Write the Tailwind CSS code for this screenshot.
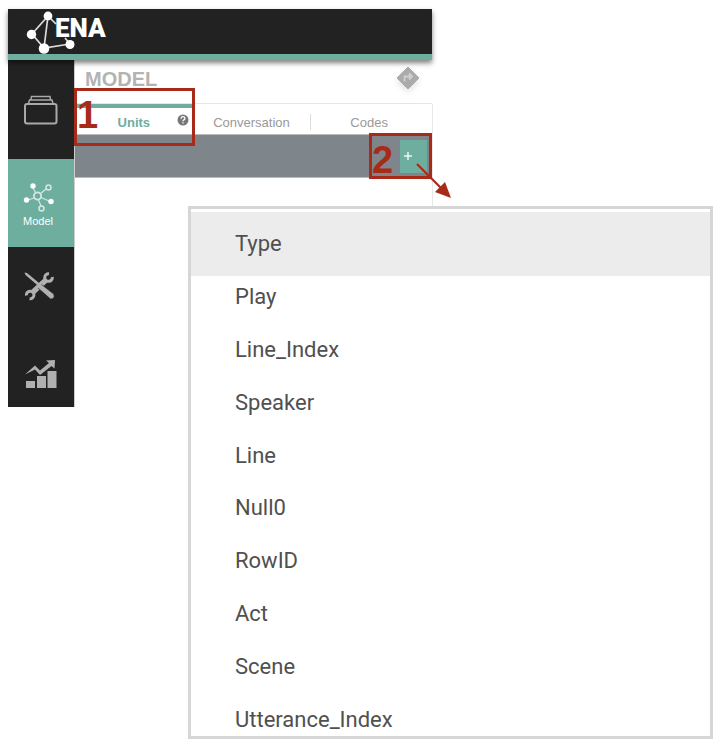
<!DOCTYPE html>
<html lang="en">
<head>
<meta charset="utf-8">
<meta name="viewport" content="width=device-width, initial-scale=1">
<title>ENA Model</title>
<script src="https://cdn.jsdelivr.net/npm/@tailwindcss/browser@4"></script>
</head>
<body class="relative min-h-screen bg-white font-['Liberation_Sans',Arial,sans-serif]">
<div class="pt-[9px] pl-2">
  <div class="w-full max-w-[424px]">
    <header class="relative z-10 flex h-[51px] items-start border-b-[6px] border-[#6eae9e] bg-[#222] shadow-[0_3px_5px_rgba(0,0,0,0.5)]">
      <svg class="absolute top-0 left-0" width="80" height="46" viewBox="0 0 80 46" aria-hidden="true">
        <g stroke="#ddd" stroke-width="1.7" fill="none"><path d="M40 7L24 25L36 39L62 35L57 29M40 7L36 39M40 7L48 15"/></g>
        <g fill="#fff"><circle cx="40" cy="7" r="4.4"/><circle cx="23.500" cy="25.500" r="4.700"/><circle cx="36" cy="39.500" r="5.300"/><circle cx="62" cy="35.500" r="4.500"/></g>
      </svg>
      <span class="relative ml-[47px] pt-[3px] font-[Roboto,sans-serif] text-[26px] leading-8 font-black text-white">ENA</span>
    </header>
    <div class="flex items-stretch">
      <nav class="w-[66px] shrink-0 bg-[#222]">
        <a href="#data" aria-label="Data sets" class="flex h-[99px] items-center justify-center">
          <svg width="34" height="30" viewBox="0 0 34 30" fill="none" stroke="#a9a9a9" stroke-width="1.500"><rect x="1" y="9" width="31.500" height="19.500" rx="2" stroke-width="2"/><path d="M4.500 8.500L5.500 5H28L29 8.500M7 4.500L7.500 1.500H26L26.500 4.500"/></svg>
        </a>
        <a href="#model" class="flex h-[88px] flex-col items-center bg-[#6eae9e] pt-6 pr-[6px] text-[11px] leading-4 text-white">
          <svg class="ml-px" width="32" height="30" viewBox="0 0 32 30" fill="none" stroke="#d3e8e2" stroke-width="1.200"><path d="M10 5L12.500 9.500M17 11L23 6M11 15L5 17M18 14.500L26 18M15.500 17L18 23"/><circle cx="14.500" cy="13" r="3.600" stroke-width="1.800"/><circle cx="25.500" cy="4.500" r="2.500" stroke-width="1.500"/><circle cx="18.500" cy="25.500" r="2.500" stroke-width="1.500"/><g fill="#fff" stroke="none"><circle cx="10" cy="3" r="2.700"/><circle cx="3.500" cy="17" r="2.700"/><circle cx="28" cy="18.500" r="2.700"/></g></svg>
          <span>Model</span>
        </a>
        <a href="#tools" aria-label="Tools" class="flex h-[88px] items-start justify-center pt-6 pr-[2px]">
          <svg width="32" height="30" viewBox="0 0 32 30"><path d="M8.500 21.500L22 9" stroke="#b0b0b0" stroke-width="5.500"/><path d="M28.300 6A3.800 3.800 0 1 1 25 2.800M2.400 24.500A3.800 3.800 0 1 1 5.600 27.700" fill="none" stroke="#b0b0b0" stroke-width="3"/><path d="M17.500 13.500L29.800 23Q31.500 28 26.500 28L14 17" fill="#b0b0b0" stroke="#222" stroke-width=".7"/><path d="M.5 1.500L3 2L17.500 14L15.500 16L1.500 4Z" fill="#b0b0b0"/></svg>
        </a>
        <a href="#stats" aria-label="Statistics" class="flex h-[72px] items-start justify-center pt-6">
          <svg width="32" height="30" viewBox="0 0 32 30" fill="#b0b0b0"><path d="M1 22h9v7H1zM12 17h9v12H12zM22.500 12h9V29h-9zM0 15.500L10 6.500L15 11.500L24 4L21 1.500L30 1L29.500 9.500L26.500 7L15 16L10 10.500Z"/></svg>
        </a>
      </nav>
      <main class="min-w-0 flex-1 border-l border-[#ccc]">
        <div class="flex h-11 items-center justify-between border-b border-[#e6e6e6] pr-3 pl-[10px]">
          <h1 class="pb-[6px] text-[20px] leading-6 font-bold text-[#b3b3b3]">MODEL</h1>
          <button aria-label="Next step" class="mb-2 drop-shadow-md"><svg width="24" height="24" viewBox="0 0 24 24"><path d="M12 1L23 12L12 23L1 12Z" fill="#ababab" stroke="#ababab" stroke-linejoin="round"/><path d="M8.500 15.500V10.500H15.500M13 7.500L16 10.500L13 13.500" fill="none" stroke="#d0d0d0" stroke-width="1.800"/></svg></button>
        </div>
        <div class="-mr-px border-r border-[#e8e8e8]">
          <div role="tablist" class="grid h-[30px] grid-cols-3 pr-1 text-[13px] leading-4 text-[#999]">
            <button role="tab" aria-selected="true" class="relative border-t-4 border-[#6eae9e] pt-1 font-bold text-[#6eae9e]">Units
              <svg class="absolute top-[6px] right-1" width="12" height="12" viewBox="0 0 12 12"><circle cx="6" cy="6" r="5.500" fill="#777"/><path d="M4 4.600Q4.200 2.700 6 2.700T8 4.300Q8 5.300 6.900 5.900Q6 6.400 6 7.300M6 8.300V9.600" stroke="#fff" stroke-width="1.300" fill="none"/></svg>
            </button>
            <button role="tab" class="pt-2">Conversation</button>
            <button role="tab" class="relative pt-2"><span class="absolute top-[10px] left-0 h-4 w-px bg-[#ddd]"></span>Codes</button>
          </div>
          <div class="flex h-11 items-center justify-end border-y border-[#bbb] bg-[#7f868b] pr-[5px]">
            <button aria-label="Add unit" class="flex h-[33px] w-[27px] items-center bg-[#6eae9e] pl-1"><svg width="8" height="8" viewBox="0 0 8 8"><path d="M4 0V8M0 4H8" stroke="#eef7f4" stroke-width="1.500"/></svg></button>
          </div>
          <div class="h-8"></div>
        </div>
      </main>
    </div>
  </div>
</div>

<!-- Unit column menu -->
<div class="absolute top-[206px] right-2 left-[188px] h-[533px] overflow-hidden border-[3px] border-[#d6d6d6] bg-white pt-[3px] font-[Roboto,sans-serif] text-[22px] leading-7 text-[#505050]">
  <button class="flex h-16 w-full items-center bg-[#ececec] pl-11">Type</button>
  <div class="-mt-[5px] grid h-[475px] auto-rows-fr">
    <button class="flex items-center pl-11">Play</button>
    <button class="flex items-center pl-11">Line_Index</button>
    <button class="flex items-center pl-11">Speaker</button>
    <button class="flex items-center pl-11">Line</button>
    <button class="flex items-center pl-11">Null0</button>
    <button class="flex items-center pl-11">RowID</button>
    <button class="flex items-center pl-11">Act</button>
    <button class="flex items-center pl-11">Scene</button>
    <button class="flex items-center pl-11">Utterance_Index</button>
  </div>
</div>

<!-- Step callouts -->
<div class="pointer-events-none absolute top-[88px] left-[74px] z-20 h-[58px] w-[121px] border-[3px] border-[#a82a18] text-[38px] leading-[48px] font-bold text-[#a82a18]">1</div>
<div class="pointer-events-none absolute top-[133px] left-[369px] z-20 h-[46px] w-[63px] border-[3px] border-[#a82a18] text-[38px] leading-[48px] font-bold text-[#a82a18]">2</div>
<svg class="pointer-events-none absolute top-[160px] left-[414px] z-20" width="40" height="40" viewBox="0 0 40 40"><path d="M3 4L27 28" stroke="#a82a18" stroke-width="2.200"/><path d="M37 38L31 22L21 32Z" fill="#a82a18"/></svg>
</body>
</html>
